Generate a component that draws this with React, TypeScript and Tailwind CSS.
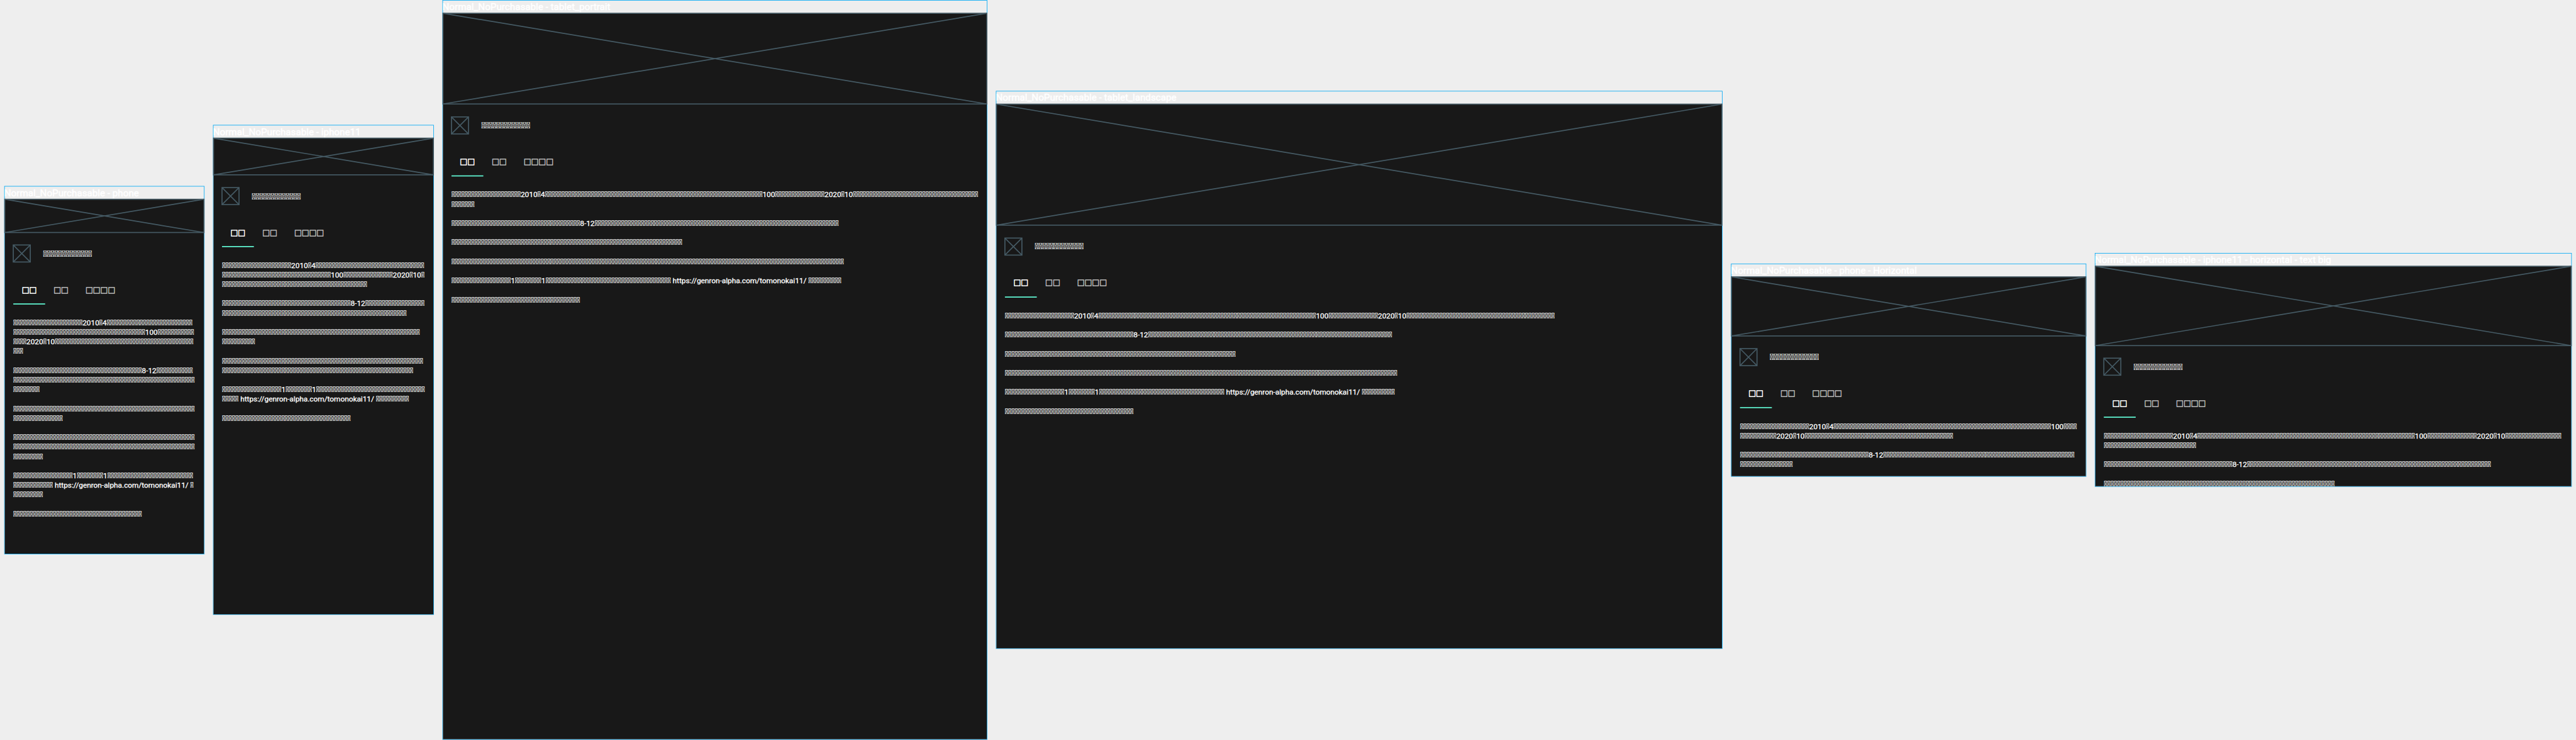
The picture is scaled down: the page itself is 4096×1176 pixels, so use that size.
const MISSING = "\uE000";

// A number stands for that many missing glyphs, a string is drawn as it is.
type Run = number | string;
type Line = Run[];

interface Device {
  label: string;
  size: string;
  paragraphs: Line[][];
}

const URL_TEXT = " https://genron-alpha.com/tomonokai11/ ";

const wideTail: Line[][] = [
  [[39, "8-12", 74]],
  [[70]],
  [[119]],
  [[18, "1", 8, "1", 38, URL_TEXT, 10]],
  [[39]],
];

const devices: Device[] = [
  {
    label: "Normal_NoPurchasable - phone",
    size: "w-[377px] h-[693px]",
    paragraphs: [
      [[21, "2010", 1, "4", 26], [40, "100", 11], [4, "2020", 1, "10", 42], [3]],
      [[39, "8-12", 11], [55], [8]],
      [[55], [15]],
      [[55], [55], [9]],
      [[18, "1", 8, "1", 26], [12, URL_TEXT, 1], [9]],
      [[39]],
    ],
  },
  {
    label: "Normal_NoPurchasable - iphone11",
    size: "w-[416px] h-[922px]",
    paragraphs: [
      [[21, "2010", 1, "4", 33], [33, "100", 15, "2020", 1, "10", 1], [44]],
      [[39, "8-12", 18], [56]],
      [[60], [10]],
      [[61], [58]],
      [[18, "1", 8, "1", 33], [5, URL_TEXT, 10]],
      [[39]],
    ],
  },
  {
    label: "Normal_NoPurchasable - tablet_portrait",
    size: "w-[1026px] h-[1392px]",
    paragraphs: [[[21, "2010", 1, "4", 66, "100", 15, "2020", 1, "10", 38], [7]], ...wideTail],
  },
  {
    label: "Normal_NoPurchasable - tablet_landscape",
    size: "w-[1368px] h-[1050px]",
    paragraphs: [[[21, "2010", 1, "4", 66, "100", 15, "2020", 1, "10", 45]], ...wideTail],
  },
  {
    label: "Normal_NoPurchasable - phone - Horizontal",
    size: "w-[669px] h-[401px]",
    paragraphs: [
      [[21, "2010", 1, "4", 66, "100", 4], [11, "2020", 1, "10", 45]],
      [[39, "8-12", 58], [16]],
    ],
  },
  {
    label: "Normal_NoPurchasable - iphone11 - horizontal - text big",
    size: "w-[898px] h-[440px]",
    paragraphs: [
      [[21, "2010", 1, "4", 66, "100", 15, "2020", 1, "10", 17], [28]],
      [[39, "8-12", 74]],
      [[70]],
    ],
  },
];

// Latin runs get a slightly heavier outline than the missing glyphs.
function TextLine({ line }: { line: Line }) {
  return (
    <span className="block whitespace-pre">
      {line.map((run, i) =>
        typeof run === "number" ? (
          MISSING.repeat(run)
        ) : (
          <span key={i} className="[-webkit-text-stroke:0.35px]">
            {run}
          </span>
        ),
      )}
    </span>
  );
}

function Placeholder({ className }: { className: string }) {
  return (
    <svg className={`block shrink-0 overflow-visible ${className}`} stroke="#455A64" strokeWidth="2" fill="none">
      <rect width="100%" height="100%" />
      <line x1="0" y1="0" x2="100%" y2="100%" />
      <line x1="100%" y1="0" x2="0" y2="100%" />
    </svg>
  );
}

function Tab({ text, active = false }: { text: string; active?: boolean }) {
  return (
    <div
      className={`flex h-12 items-center border-b-2 px-4 pb-[5px] font-['Noto_Sans_CJK_JP',sans-serif] text-[14px] leading-none whitespace-nowrap [-webkit-text-stroke:0.9px] ${
        active ? "border-[#64FFDA] text-white" : "border-transparent text-[#b9b9b9]"
      }`}
    >
      {text}
    </div>
  );
}

function DeviceFrame({ device }: { device: Device }) {
  return (
    <section className={`flex shrink-0 flex-col border border-[#03A9F4] ${device.size}`}>
      <h2 className="-ml-px h-6 shrink-0 text-[18px] leading-[23px] whitespace-nowrap text-white [-webkit-text-stroke:0.5px]">
        {device.label}
      </h2>
      <div className="flex min-h-0 flex-1 flex-col bg-[#181818] text-white">
        <Placeholder className="aspect-[6/1] w-full" />
        <div className="flex min-h-0 flex-1 flex-col overflow-hidden px-[15px] pt-[23px] [-webkit-text-stroke:0.14px]">
          <div className="flex shrink-0 items-center gap-6 px-px pt-px">
            <Placeholder className="h-8 w-8" />
            <p className="pt-px text-[16px] leading-5 whitespace-nowrap">{MISSING.repeat(13)}</p>
          </div>
          <nav className="mt-8 flex shrink-0 px-px">
            <Tab text="□□" active />
            <Tab text="□□" />
            <Tab text="□□□□" />
          </nav>
          <div className="mt-[25px] flex flex-col gap-[18px] px-px text-[14px] leading-[18px]">
            {device.paragraphs.map((lines, i) => (
              <p key={i}>
                {lines.map((line, j) => (
                  <TextLine key={j} line={line} />
                ))}
              </p>
            ))}
          </div>
        </div>
      </div>
    </section>
  );
}

export default function App() {
  return (
    <div className="h-[1176px] w-[4096px] overflow-hidden bg-[#eeeeee] font-['Roboto',sans-serif]">
      <main className="flex h-[1392px] w-[4850px] origin-top-left scale-[0.84454] items-center gap-4 px-2">
        {devices.map((device) => (
          <DeviceFrame key={device.label} device={device} />
        ))}
      </main>
    </div>
  );
}
